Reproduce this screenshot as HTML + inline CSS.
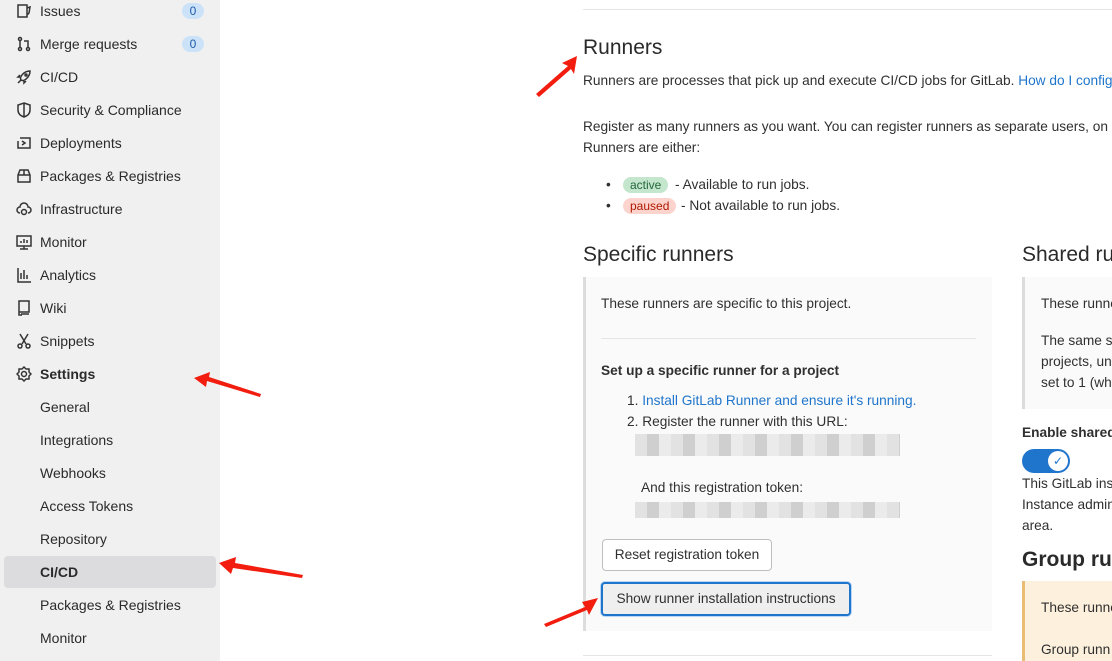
<!DOCTYPE html>
<html><head><meta charset="utf-8"><style>
*{margin:0;padding:0;box-sizing:border-box}
body{width:1112px;height:661px;overflow:hidden;background:#fff;font-family:"Liberation Sans",sans-serif;font-size:13.7px;color:#303030;position:relative}
.a{position:absolute;white-space:nowrap}
#sb{position:absolute;left:0;top:0;width:220px;height:661px;background:#f0f0f0}
.it{position:absolute;left:40px;font-size:14px;color:#2a2a2a;line-height:16px}
.ic{position:absolute;left:16px;width:16px;height:16px}
.bd{position:absolute;left:182px;width:22px;height:16px;border-radius:8px;background:#cbe2f9;color:#1f5ca8;font-size:12px;text-align:center;line-height:16px}
a{color:#1f75cb;text-decoration:none}
.h{font-size:21px;color:#2a2a2a}
.box{position:absolute;background:#fafafa;border-left:3px solid #dcdcdc}
.btn{position:absolute;border:1px solid #bfbfbf;border-radius:4px;background:#fff;font-size:13.7px;text-align:center}
.blur{position:absolute;background:repeating-linear-gradient(90deg,#e2e2e2 0 12px,#cfcfcf 12px 24px,#ebebeb 24px 36px)}
</style></head><body>
<div id="sb">
<svg class="ic" style="top:3px" viewBox="0 0 16 16" fill="none" stroke="#333" stroke-width="1.5"><path d="M2 2h9v12H2zM11 5l3-1-1 6-2 2"/></svg><div class="it" style="top:3px">Issues</div><div class="bd" style="top:3px">0</div>
<svg class="ic" style="top:36px" viewBox="0 0 16 16" fill="none" stroke="#333" stroke-width="1.5"><circle cx="4" cy="3" r="1.5"/><circle cx="4" cy="13" r="1.5"/><circle cx="12" cy="13" r="1.5"/><path d="M4 5v6M12 11V5H8"/></svg><div class="it" style="top:36px">Merge requests</div><div class="bd" style="top:36px">0</div>
<svg class="ic" style="top:69px" viewBox="0 0 16 16" fill="none" stroke="#333" stroke-width="1.5"><path d="M5 11C3 8 8 2 14 2c0 6-6 11-9 9zM2 14l3-3M4 8H2l2-2M8 12v2l2-2"/><circle cx="10" cy="6" r="1"/></svg><div class="it" style="top:69px">CI/CD</div>
<svg class="ic" style="top:102px" viewBox="0 0 16 16" fill="none" stroke="#333" stroke-width="1.5"><path d="M8 1l6 2v5c0 4-3 6-6 7-3-1-6-3-6-7V3zM8 1v14"/></svg><div class="it" style="top:102px">Security &amp; Compliance</div>
<svg class="ic" style="top:135px" viewBox="0 0 16 16" fill="none" stroke="#333" stroke-width="1.5"><path d="M4 3h10v10H4M2 6v7h2M6 6l3 2-3 2"/></svg><div class="it" style="top:135px">Deployments</div>
<svg class="ic" style="top:168px" viewBox="0 0 16 16" fill="none" stroke="#333" stroke-width="1.5"><path d="M2 7l2-5h8l2 5v7H2zM2 7h12M8 2v5"/></svg><div class="it" style="top:168px">Packages &amp; Registries</div>
<svg class="ic" style="top:201px" viewBox="0 0 16 16" fill="none" stroke="#333" stroke-width="1.5"><path d="M4 12a3 3 0 010-6 4 4 0 018 0 3 3 0 010 6"/><circle cx="8" cy="11" r="2.5"/></svg><div class="it" style="top:201px">Infrastructure</div>
<svg class="ic" style="top:234px" viewBox="0 0 16 16" fill="none" stroke="#333" stroke-width="1.5"><path d="M1 2h14v10H1zM8 12v3M4 15h8M5 9V7M8 9V5M11 9V6"/></svg><div class="it" style="top:234px">Monitor</div>
<svg class="ic" style="top:267px" viewBox="0 0 16 16" fill="none" stroke="#333" stroke-width="1.5"><path d="M2 1v14h13M5 12V6M8 12V3M11 12V8"/></svg><div class="it" style="top:267px">Analytics</div>
<svg class="ic" style="top:300px" viewBox="0 0 16 16" fill="none" stroke="#333" stroke-width="1.5"><path d="M3 1h10v11H3zM3 12v3h3M5 14h8"/></svg><div class="it" style="top:300px">Wiki</div>
<svg class="ic" style="top:333px" viewBox="0 0 16 16" fill="none" stroke="#333" stroke-width="1.5"><path d="M4 1l6 10M12 1L6 11"/><circle cx="4" cy="13" r="2"/><circle cx="12" cy="13" r="2"/></svg><div class="it" style="top:333px">Snippets</div>
<svg class="ic" style="top:366px" viewBox="0 0 16 16" fill="none" stroke="#333" stroke-width="1.5"><circle cx="8" cy="8" r="2.5"/><path d="M8 1l2 2 3 0 0 3 2 2-2 2 0 3-3 0-2 2-2-2-3 0 0-3-2-2 2-2 0-3 3 0z"/></svg><div class="it" style="top:366px;font-weight:bold">Settings</div>
<div class="it" style="top:399px">General</div>
<div class="it" style="top:432px">Integrations</div>
<div class="it" style="top:465px">Webhooks</div>
<div class="it" style="top:498px">Access Tokens</div>
<div class="it" style="top:531px">Repository</div>
<div style="position:absolute;left:4px;top:556px;width:212px;height:32px;background:#dcdcde;border-radius:4px"></div>
<div class="it" style="top:564px;font-weight:bold">CI/CD</div>
<div class="it" style="top:597px">Packages &amp; Registries</div>
<div class="it" style="top:630px">Monitor</div>
</div>

<div style="position:absolute;left:583px;top:9px;width:529px;height:1px;background:#e5e5e5"></div>
<div class="a h" style="left:583px;top:36px">Runners</div>
<div class="a" style="left:583px;top:73px">Runners are processes that pick up and execute CI/CD jobs for GitLab. <a>How do I configure</a></div>
<div class="a" style="left:583px;top:119px">Register as many runners as you want. You can register runners as separate users, on s</div>
<div class="a" style="left:583px;top:140px">Runners are either:</div>
<div class="a" style="left:606px;top:177px">•</div>
<div class="a" style="left:623px;top:177px;background:#c3e6cd;color:#24663b;font-size:12px;border-radius:8px;padding:0 7px;height:16px;line-height:16px">active</div>
<div class="a" style="left:675px;top:177px">- Available to run jobs.</div>
<div class="a" style="left:606px;top:198px">•</div>
<div class="a" style="left:623px;top:198px;background:#fdd4cd;color:#ae1800;font-size:12px;border-radius:8px;padding:0 7px;height:16px;line-height:16px">paused</div>
<div class="a" style="left:681px;top:198px">- Not available to run jobs.</div>

<div class="a h" style="left:583px;top:243px">Specific runners</div>
<div class="a h" style="left:1022px;top:243px">Shared ru</div>

<div class="box" style="left:583px;top:277px;width:409px;height:354px"></div>
<div class="a" style="left:601px;top:296px">These runners are specific to this project.</div>
<div style="position:absolute;left:601px;top:338px;width:375px;height:1px;background:#e5e5e5"></div>
<div class="a" style="left:601px;top:363px;font-weight:bold">Set up a specific runner for a project</div>
<div class="a" style="left:627px;top:393px">1. <a>Install GitLab Runner and ensure it's running.</a></div>
<div class="a" style="left:627px;top:414px">2. Register the runner with this URL:</div>
<div class="blur" style="left:635px;top:434px;width:265px;height:22px"></div>
<div class="a" style="left:641px;top:480px">And this registration token:</div>
<div class="blur" style="left:635px;top:502px;width:265px;height:16px"></div>
<div class="btn" style="left:602px;top:539px;width:170px;height:32px;line-height:30px">Reset registration token</div>
<div class="btn" style="left:601px;top:582px;width:250px;height:34px;line-height:30px;background:#efefef;border:2px solid #1f75cb;box-shadow:0 0 0 1px #bcd7f3">Show runner installation instructions</div>
<div style="position:absolute;left:583px;top:655px;width:409px;height:1px;background:#e5e5e5"></div>

<div class="box" style="left:1022px;top:277px;width:90px;height:132px"></div>
<div class="a" style="left:1041px;top:296px">These runne</div>
<div class="a" style="left:1041px;top:333px">The same sh</div>
<div class="a" style="left:1041px;top:354px">projects, un</div>
<div class="a" style="left:1041px;top:375px">set to 1 (wh</div>
<div class="a" style="left:1022px;top:425px;font-weight:bold">Enable shared</div>
<div style="position:absolute;left:1022px;top:449px;width:48px;height:24px;border-radius:12px;background:#1f75cb"></div>
<div style="position:absolute;left:1048px;top:451px;width:20px;height:20px;border-radius:10px;background:#fff;color:#1f75cb;font-size:12px;text-align:center;line-height:20px">✓</div>
<div class="a" style="left:1022px;top:476px">This GitLab ins</div>
<div class="a" style="left:1022px;top:497px">Instance admin</div>
<div class="a" style="left:1022px;top:518px">area.</div>
<div class="a h" style="left:1022px;top:548px;font-weight:bold;font-size:21px">Group run</div>
<div style="position:absolute;left:1022px;top:581px;width:90px;height:80px;background:#fdf1dd;border-left:3px solid #e9be74"></div>
<div class="a" style="left:1041px;top:600px">These runne</div>
<div class="a" style="left:1041px;top:642px">Group runn</div>

<svg style="position:absolute;left:0;top:0" width="1112" height="661">
<g fill="#f21d0e">
<polygon points="577,56 562,63 568,66 536,94 539,97 571,69 574,74"/>
<polygon points="194,378 210,372 209,377 261,394 260,397 207,381 206,387"/>
<polygon points="219,563 236,557 235,563 303,575 302,578 233,568 231,574"/>
<polygon points="598,598 582,602 585,607 544,624 546,627 587,610 589,615"/>
</g>
</svg>
</body></html>
